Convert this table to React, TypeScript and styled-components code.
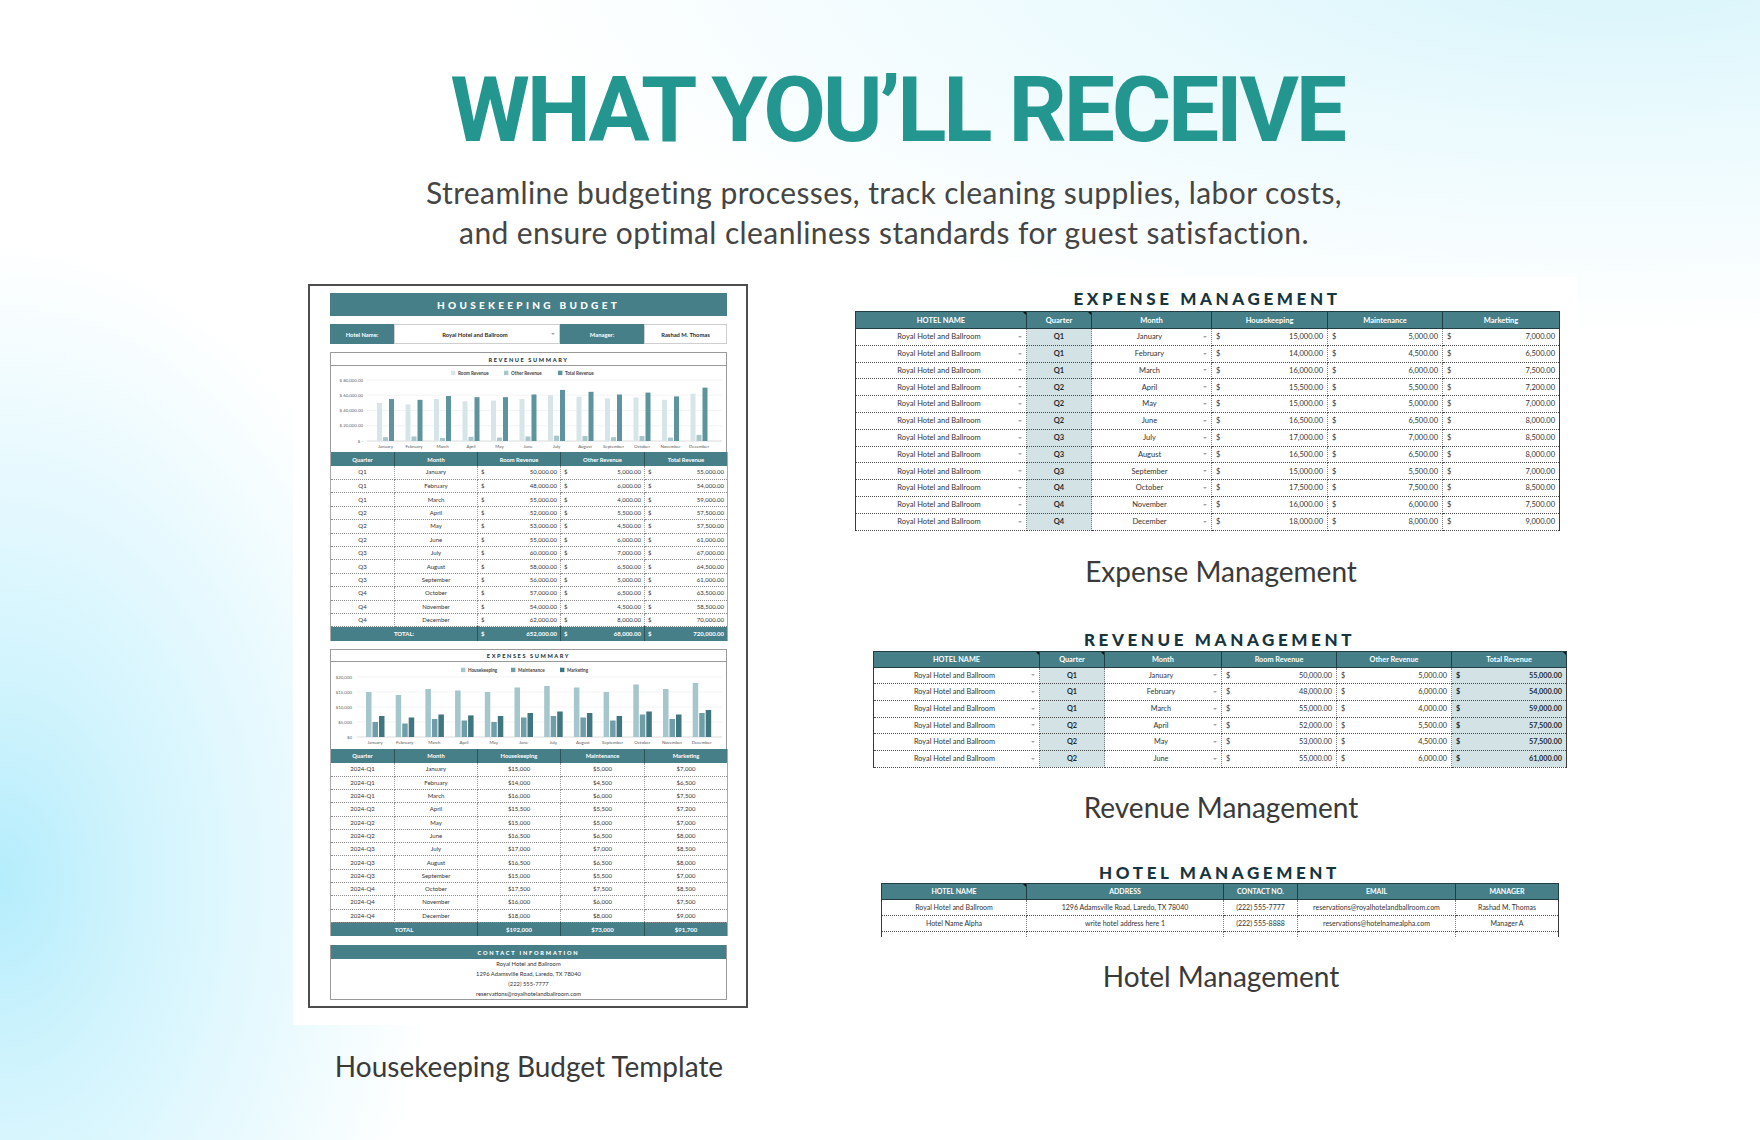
import React from 'react';
import styled, { createGlobalStyle } from 'styled-components';

const GlobalStyle = createGlobalStyle`
  html, body { margin: 0; padding: 0; }
  body { font-family: Lato, 'Liberation Sans', sans-serif; }
`;

const months = ['January', 'February', 'March', 'April', 'May', 'June', 'July', 'August', 'September', 'October', 'November', 'December'];
const quarters = ['Q1', 'Q1', 'Q1', 'Q2', 'Q2', 'Q2', 'Q3', 'Q3', 'Q3', 'Q4', 'Q4', 'Q4'];
const revenue = [
  [50000, 5000, 55000], [48000, 6000, 54000], [55000, 4000, 59000], [52000, 5500, 57500],
  [53000, 4500, 57500], [55000, 6000, 61000], [60000, 7000, 67000], [58000, 6500, 64500],
  [56000, 5000, 61000], [57000, 6500, 63500], [54000, 4500, 58500], [62000, 8000, 70000],
];
const expenses = [
  [15000, 5000, 7000], [14000, 4500, 6500], [16000, 6000, 7500], [15500, 5500, 7200],
  [15000, 5000, 7000], [16500, 6500, 8000], [17000, 7000, 8500], [16500, 6500, 8000],
  [15000, 5500, 7000], [17500, 7500, 8500], [16000, 6000, 7500], [18000, 8000, 9000],
];

const fmt2 = (n: number) => n.toLocaleString('en-US', { minimumFractionDigits: 2, maximumFractionDigits: 2 });
const fmt0 = (n: number) => '$' + n.toLocaleString('en-US');

/* ---------- page ---------- */

const Page = styled.div`
  width: 1760px;
  height: 1140px;
  overflow: hidden;
  box-sizing: border-box;
  padding-top: 65px;
  background:
    radial-gradient(ellipse 440px 640px at 0px 880px, #b5edfc 0%, rgba(190, 239, 252, 0.7) 32%, rgba(255, 255, 255, 0) 100%),
    radial-gradient(ellipse 1150px 380px at 1620px -40px, #d6f4fb 0%, rgba(222, 247, 252, 0.6) 45%, rgba(255, 255, 255, 0) 100%),
    #ffffff;
`;

const Title = styled.h1`
  margin: 0;
  padding-left: 34px;
  font-family: Roboto, 'Liberation Sans', sans-serif;
  font-weight: 700;
  font-size: 91px;
  line-height: 91px;
  letter-spacing: -3.2px;
  color: #23978f;
  text-align: center;
`;

const Subtitle = styled.p`
  margin: 16px 0 0;
  padding-left: 8px;
  font-family: Lato, 'Liberation Sans', sans-serif;
  font-size: 30px;
  line-height: 40px;
  letter-spacing: 0.4px;
  color: #454545;
  text-align: center;
`;

const Main = styled.div`
  display: flex;
  align-items: flex-start;
  margin-top: 16px;
  padding-left: 293px;
`;

const LeftCol = styled.div`
  width: 472px;
  display: flex;
  flex-direction: column;
`;

const RightCol = styled.div`
  width: 736px;
  margin: 9px 0 0 88px;
  display: flex;
  flex-direction: column;
  align-items: flex-start;
`;

const Caption = styled.div<{ $mt: number }>`
  align-self: stretch;
  margin-top: ${p => p.$mt}px;
  font-family: Lato, 'Liberation Sans', sans-serif;
  font-size: 28px;
  line-height: 40px;
  color: #3a3a3a;
  text-align: center;
`;

/* ---------- printed document ---------- */

const DocFrame = styled.div`
  background: #ffffff;
  padding: 16px 17px 17px 15px;
`;

const Doc = styled.div`
  width: 440px;
  height: 724px;
  box-sizing: border-box;
  border: 2px solid #4d4d4d;
  padding: 7px 19px 0 20px;
  background: #ffffff;
  display: flex;
  flex-direction: column;
  gap: 8px;
  font-family: Lato, 'Liberation Sans', sans-serif;
  color: #333;
`;

const DocBanner = styled.div`
  height: 23px;
  background: #477f89;
  color: #ffffff;
  display: flex;
  align-items: center;
  justify-content: center;
  font-weight: 900;
  font-size: 10px;
  letter-spacing: 3.3px;
`;

const InfoRow = styled.div`
  display: grid;
  grid-template-columns: 64px 166px 84px 83px;
  height: 20px;
`;

const InfoLabel = styled.div`
  background: #477f89;
  color: #ffffff;
  font-weight: 700;
  font-size: 5.8px;
  display: flex;
  align-items: center;
  justify-content: center;
`;

const InfoValue = styled.div`
  box-sizing: border-box;
  border: 1px solid #cfcfcf;
  font-weight: 700;
  font-size: 5.8px;
  color: #2b2b2b;
  display: flex;
  align-items: center;
  justify-content: center;
  padding: 0 4px;
`;

const SummaryBox = styled.div`
  display: flex;
  flex-direction: column;
`;

const SummaryHead = styled.div<{ $h: number }>`
  height: ${p => p.$h}px;
  box-sizing: border-box;
  border: 1px solid #9a9a9a;
  display: flex;
  align-items: center;
  justify-content: center;
  font-weight: 900;
  font-size: 5.6px;
  letter-spacing: 1.6px;
  color: #1f3a44;
`;

const ChartBox = styled.div<{ $h: number }>`
  height: ${p => p.$h}px;
  box-sizing: border-box;
  border-left: 1px solid #9a9a9a;
  border-right: 1px solid #9a9a9a;
  svg { display: block; }
`;

const MiniTable = styled.table`
  width: 397px;
  border-collapse: collapse;
  table-layout: fixed;
  font-size: 6px;
  color: #333;
  border-left: 1px solid #aaaaaa;
  border-right: 1px solid #aaaaaa;
`;

const MiniCol = styled.col<{ $w: number }>`
  width: ${p => p.$w}px;
`;

const MiniRow = styled.tr<{ $h: number }>`
  height: ${p => p.$h}px;
`;

const MiniTh = styled.th`
  padding: 0;
  background: #477f89;
  color: #ffffff;
  font-weight: 700;
  font-size: 5.8px;
  border-right: 1px solid #2e545b;
  &:last-child { border-right: none; }
`;

const MiniTd = styled.td<{ $total?: boolean }>`
  padding: 0 3px;
  line-height: 1;
  text-align: center;
  background: ${p => (p.$total ? '#477f89' : 'transparent')};
  color: ${p => (p.$total ? '#ffffff' : '#333333')};
  font-weight: ${p => (p.$total ? 700 : 400)};
  border-bottom: ${p => (p.$total ? 'none' : '1px dotted #8c8c8c')};
  border-right: ${p => (p.$total ? '1px solid #2e545b' : '1px dotted #a0a0a0')};
  &:last-child { border-right: none; }
`;

const Money = styled.div`
  display: flex;
  justify-content: space-between;
`;

const ContactBox = styled.div`
  margin-top: 1px;
  border: 1px solid #9a9a9a;
  border-top: none;
`;

const ContactHead = styled.div`
  height: 14px;
  background: #477f89;
  color: #ffffff;
  display: flex;
  align-items: center;
  justify-content: center;
  font-weight: 900;
  font-size: 5.6px;
  letter-spacing: 1.8px;
`;

const ContactLine = styled.div`
  height: 10px;
  line-height: 10px;
  font-size: 5.8px;
  text-align: center;
  color: #333;
`;

/* ---------- spreadsheet tables ---------- */

const Block = styled.div<{ $w: number; $ml: number; $mt: number; $pad: string }>`
  width: ${p => p.$w}px;
  box-sizing: border-box;
  margin: ${p => p.$mt}px 0 0 ${p => p.$ml}px;
  padding: ${p => p.$pad};
  background: #ffffff;
`;

const SectionTitle = styled.h3<{ $mb: number }>`
  margin: 0 0 ${p => p.$mb}px;
  font-family: Lato, 'Liberation Sans', sans-serif;
  font-weight: 900;
  font-size: 17px;
  line-height: 20px;
  letter-spacing: 3.6px;
  color: #173540;
  text-align: center;
`;

const Sheet = styled.table<{ $fs: number }>`
  width: 100%;
  border-collapse: collapse;
  table-layout: fixed;
  font-family: Lato, 'Liberation Sans', sans-serif;
  font-size: ${p => p.$fs}px;
  color: #333333;
  border-left: 1px solid #3a3a3a;
  border-right: 1px solid #3a3a3a;
`;

const SheetRow = styled.tr<{ $h: number }>`
  height: ${p => p.$h}px;
`;

const SheetTh = styled.th<{ $flag?: boolean }>`
  position: relative;
  padding: 0;
  background: #477f89;
  color: #ffffff;
  font-weight: 700;
  border: 1px solid #223e44;
  &::after {
    content: '';
    display: ${p => (p.$flag ? 'block' : 'none')};
    position: absolute;
    top: 0;
    right: 0;
    border-top: 3px solid #111111;
    border-left: 3px solid transparent;
  }
`;

const SheetTd = styled.td<{ $shade?: boolean; $bold?: boolean; $open?: boolean }>`
  padding: 0 4px;
  line-height: 1;
  text-align: center;
  background: ${p => (p.$shade ? '#d3e2e5' : 'transparent')};
  font-weight: ${p => (p.$bold ? 700 : 400)};
  color: ${p => (p.$bold ? '#1d2b30' : '#333333')};
  border-bottom: ${p => (p.$open ? 'none' : '1px dotted #4a4a4a')};
  border-right: 1px dotted #7a7a7a;
  &:last-child { border-right: none; }
`;

const Pick = styled.div`
  display: flex;
  align-items: center;
`;

const PickText = styled.span`
  flex: 1;
  text-align: center;
`;

const Caret = styled.span`
  width: 0;
  height: 0;
  border-top: 2.5px solid #a5a5a5;
  border-left: 2px solid transparent;
  border-right: 2px solid transparent;
`;

/* ---------- charts ---------- */

const ChartText = styled.text`
  font-family: Lato, 'Liberation Sans', sans-serif;
`;

type LegendItem = { x: number; color: string; label: string };

function Legend({ items, y }: { items: LegendItem[]; y: number }) {
  return (
    <g>
      {items.map(it => (
        <g key={it.label}>
          <rect x={it.x} y={y - 2.3} width={4.4} height={4.4} fill={it.color} />
          <ChartText x={it.x + 7} y={y + 1.6} fontSize={4.6} fontWeight={700} fill="#444">
            {it.label}
          </ChartText>
        </g>
      ))}
    </g>
  );
}

function RevenueChart() {
  const base = 75;
  const step = 15.25;
  const scale = (4 * step) / 80000;
  const colors = ['#d6e5e8', '#a8c7cd', '#5e949d'];
  return (
    <svg width={395} height={86} viewBox="1 0 395 86">
      <Legend
        y={7}
        items={[
          { x: 121, color: colors[0], label: 'Room Revenue' },
          { x: 174, color: colors[1], label: 'Other Revenue' },
          { x: 228, color: colors[2], label: 'Total Revenue' },
        ]}
      />
      {[0, 1, 2, 3, 4].map(k => {
        const y = base - k * step;
        return (
          <g key={k}>
            <line x1={37} x2={392} y1={y} y2={y} stroke={k === 0 ? '#c4c4c4' : '#ececec'} strokeWidth={0.6} />
            <ChartText x={33} y={y + 1.6} fontSize={4.4} fill="#666" textAnchor="end">
              {k === 0 ? '$ -' : `$ ${(k * 20000).toLocaleString('en-US')}.00`}
            </ChartText>
          </g>
        );
      })}
      {revenue.map((r, i) => {
        const cx = 55 + 28.5 * i;
        return (
          <g key={i}>
            {r.map((v, j) => (
              <rect key={j} x={cx - 8 + j * 6} y={base - v * scale} width={5} height={v * scale} fill={colors[j]} />
            ))}
            <ChartText x={cx + 0.5} y={81.8} fontSize={4.4} fill="#555" textAnchor="middle">
              {months[i]}
            </ChartText>
          </g>
        );
      })}
    </svg>
  );
}

function ExpenseChart() {
  const base = 75;
  const scale = 60 / 20000;
  const colors = ['#a4c6cc', '#6f9ea8', '#3f7680'];
  return (
    <svg width={395} height={87} viewBox="1 0 395 87">
      <Legend
        y={8}
        items={[
          { x: 131, color: colors[0], label: 'Housekeeping' },
          { x: 181, color: colors[1], label: 'Maintenance' },
          { x: 230, color: colors[2], label: 'Marketing' },
        ]}
      />
      {[0, 1, 2, 3, 4].map(k => {
        const y = base - k * 15;
        return (
          <g key={k}>
            <line x1={27} x2={392} y1={y} y2={y} stroke={k === 0 ? '#c4c4c4' : '#ececec'} strokeWidth={0.6} />
            <ChartText x={22} y={y + 1.6} fontSize={4.4} fill="#666" textAnchor="end">
              {k === 0 ? '$0' : fmt0(k * 5000)}
            </ChartText>
          </g>
        );
      })}
      {expenses.map((r, i) => {
        const cx = 45 + 29.7 * i;
        return (
          <g key={i}>
            {r.map((v, j) => (
              <rect key={j} x={cx - 9 + j * 6.5} y={base - v * scale} width={5.5} height={v * scale} fill={colors[j]} />
            ))}
            <ChartText x={cx} y={82.2} fontSize={4.4} fill="#555" textAnchor="middle">
              {months[i]}
            </ChartText>
          </g>
        );
      })}
    </svg>
  );
}

/* ---------- document tables ---------- */

const docCols = [64, 83, 83, 84, 83];

function DocRevenueTable() {
  const totals = [652000, 68000, 720000];
  return (
    <MiniTable>
      <colgroup>
        {docCols.map((w, i) => <MiniCol key={i} $w={w} />)}
      </colgroup>
      <tbody>
        <MiniRow $h={14}>
          {['Quarter', 'Month', 'Room Revenue', 'Other Revenue', 'Total Revenue'].map(h => <MiniTh key={h}>{h}</MiniTh>)}
        </MiniRow>
        {revenue.map((r, i) => (
          <MiniRow key={i} $h={13.42}>
            <MiniTd>{quarters[i]}</MiniTd>
            <MiniTd>{months[i]}</MiniTd>
            {r.map((v, j) => (
              <MiniTd key={j}>
                <Money><span>$</span><span>{fmt2(v)}</span></Money>
              </MiniTd>
            ))}
          </MiniRow>
        ))}
        <MiniRow $h={14}>
          <MiniTd $total colSpan={2}>TOTAL:</MiniTd>
          {totals.map((v, j) => (
            <MiniTd $total key={j}>
              <Money><span>$</span><span>{fmt2(v)}</span></Money>
            </MiniTd>
          ))}
        </MiniRow>
      </tbody>
    </MiniTable>
  );
}

function DocExpenseTable() {
  const totals = [192000, 73000, 91700];
  return (
    <MiniTable>
      <colgroup>
        {docCols.map((w, i) => <MiniCol key={i} $w={w} />)}
      </colgroup>
      <tbody>
        <MiniRow $h={14}>
          {['Quarter', 'Month', 'Housekeeping', 'Maintenance', 'Marketing'].map(h => <MiniTh key={h}>{h}</MiniTh>)}
        </MiniRow>
        {expenses.map((r, i) => (
          <MiniRow key={i} $h={13.3}>
            <MiniTd>2024-{quarters[i]}</MiniTd>
            <MiniTd>{months[i]}</MiniTd>
            {r.map((v, j) => <MiniTd key={j}>{fmt0(v)}</MiniTd>)}
          </MiniRow>
        ))}
        <MiniRow $h={14}>
          <MiniTd $total colSpan={2}>TOTAL</MiniTd>
          {totals.map((v, j) => <MiniTd $total key={j}>{fmt0(v)}</MiniTd>)}
        </MiniRow>
      </tbody>
    </MiniTable>
  );
}

function BudgetDocument() {
  return (
    <DocFrame>
      <Doc>
        <DocBanner>HOUSEKEEPING BUDGET</DocBanner>
        <InfoRow>
          <InfoLabel>Hotel Name:</InfoLabel>
          <InfoValue>
            <PickText>Royal Hotel and Ballroom</PickText>
            <Caret />
          </InfoValue>
          <InfoLabel>Manager:</InfoLabel>
          <InfoValue>Rashad M. Thomas</InfoValue>
        </InfoRow>
        <SummaryBox>
          <SummaryHead $h={14}>REVENUE SUMMARY</SummaryHead>
          <ChartBox $h={86}>
            <RevenueChart />
          </ChartBox>
          <DocRevenueTable />
        </SummaryBox>
        <SummaryBox>
          <SummaryHead $h={13}>EXPENSES SUMMARY</SummaryHead>
          <ChartBox $h={87}>
            <ExpenseChart />
          </ChartBox>
          <DocExpenseTable />
        </SummaryBox>
        <ContactBox>
          <ContactHead>CONTACT INFORMATION</ContactHead>
          <ContactLine>Royal Hotel and Ballroom</ContactLine>
          <ContactLine>1296 Adamsville Road, Laredo, TX 78040</ContactLine>
          <ContactLine>(222) 555-7777</ContactLine>
          <ContactLine>reservations@royalhotelandballroom.com</ContactLine>
        </ContactBox>
      </Doc>
    </DocFrame>
  );
}

/* ---------- spreadsheet sections ---------- */

const SheetCol = styled.col<{ $w: number }>`
  width: ${p => p.$w}px;
`;

function ExpenseSheet() {
  const cols = [171, 65, 120, 116, 115, 117];
  return (
    <Sheet $fs={7.5}>
      <colgroup>
        {cols.map((w, i) => <SheetCol key={i} $w={w} />)}
      </colgroup>
      <tbody>
        <SheetRow $h={17}>
          <SheetTh $flag>HOTEL NAME</SheetTh>
          <SheetTh $flag>Quarter</SheetTh>
          <SheetTh>Month</SheetTh>
          <SheetTh>Housekeeping</SheetTh>
          <SheetTh>Maintenance</SheetTh>
          <SheetTh>Marketing</SheetTh>
        </SheetRow>
        {expenses.map((r, i) => (
          <SheetRow key={i} $h={16.8}>
            <SheetTd>
              <Pick><PickText>Royal Hotel and Ballroom</PickText><Caret /></Pick>
            </SheetTd>
            <SheetTd $shade $bold>{quarters[i]}</SheetTd>
            <SheetTd>
              <Pick><PickText>{months[i]}</PickText><Caret /></Pick>
            </SheetTd>
            {r.map((v, j) => (
              <SheetTd key={j}>
                <Money><span>$</span><span>{fmt2(v)}</span></Money>
              </SheetTd>
            ))}
          </SheetRow>
        ))}
      </tbody>
    </Sheet>
  );
}

function RevenueSheet() {
  const cols = [166, 65, 117, 115, 115, 115];
  return (
    <Sheet $fs={7.3}>
      <colgroup>
        {cols.map((w, i) => <SheetCol key={i} $w={w} />)}
      </colgroup>
      <tbody>
        <SheetRow $h={16}>
          <SheetTh $flag>HOTEL NAME</SheetTh>
          <SheetTh $flag>Quarter</SheetTh>
          <SheetTh>Month</SheetTh>
          <SheetTh>Room Revenue</SheetTh>
          <SheetTh>Other Revenue</SheetTh>
          <SheetTh $flag>Total Revenue</SheetTh>
        </SheetRow>
        {revenue.slice(0, 6).map((r, i) => (
          <SheetRow key={i} $h={16.67}>
            <SheetTd>
              <Pick><PickText>Royal Hotel and Ballroom</PickText><Caret /></Pick>
            </SheetTd>
            <SheetTd $shade $bold>{quarters[i]}</SheetTd>
            <SheetTd>
              <Pick><PickText>{months[i]}</PickText><Caret /></Pick>
            </SheetTd>
            {r.map((v, j) => (
              <SheetTd key={j} $shade={j === 2} $bold={j === 2}>
                <Money><span>$</span><span>{fmt2(v)}</span></Money>
              </SheetTd>
            ))}
          </SheetRow>
        ))}
      </tbody>
    </Sheet>
  );
}

const hotels = [
  ['Royal Hotel and Ballroom', '1296 Adamsville Road, Laredo, TX 78040', '(222) 555-7777', 'reservations@royalhotelandballroom.com', 'Rashad M. Thomas'],
  ['Hotel Name Alpha', 'write hotel address here 1', '(222) 555-8888', 'reservations@hotelnamealpha.com', 'Manager A'],
];

function HotelSheet() {
  const cols = [145, 197, 74, 158, 103];
  return (
    <Sheet $fs={7}>
      <colgroup>
        {cols.map((w, i) => <SheetCol key={i} $w={w} />)}
      </colgroup>
      <tbody>
        <SheetRow $h={16}>
          <SheetTh $flag>HOTEL NAME</SheetTh>
          <SheetTh>ADDRESS</SheetTh>
          <SheetTh>CONTACT NO.</SheetTh>
          <SheetTh>EMAIL</SheetTh>
          <SheetTh>MANAGER</SheetTh>
        </SheetRow>
        {hotels.map((h, i) => (
          <SheetRow key={i} $h={16}>
            {h.map((c, j) => <SheetTd key={j}>{c}</SheetTd>)}
          </SheetRow>
        ))}
        <SheetRow $h={6}>
          {cols.map((_, j) => <SheetTd key={j} $open />)}
        </SheetRow>
      </tbody>
    </Sheet>
  );
}

export default function App() {
  return (
    <Page>
      <GlobalStyle />
      <Title>WHAT YOU’LL RECEIVE</Title>
      <Subtitle>
        Streamline budgeting processes, track cleaning supplies, labor costs,
        <br />
        and ensure optimal cleanliness standards for guest satisfaction.
      </Subtitle>
      <Main>
        <LeftCol>
          <BudgetDocument />
          <Caption $mt={21}>Housekeeping Budget Template</Caption>
        </LeftCol>
        <RightCol>
          <Block $w={724} $ml={0} $mt={0} $pad="12px 18px 5px 2px">
            <SectionTitle $mb={2}>EXPENSE MANAGEMENT</SectionTitle>
            <ExpenseSheet />
          </Block>
          <Caption $mt={15}>Expense Management</Caption>
          <Block $w={701} $ml={16} $mt={31} $pad="8px 4px 4px 4px">
            <SectionTitle $mb={1}>REVENUE MANAGEMENT</SectionTitle>
            <RevenueSheet />
          </Block>
          <Caption $mt={15}>Revenue Management</Caption>
          <Block $w={685} $ml={24} $mt={28} $pad="8px 4px 0 4px">
            <SectionTitle $mb={0}>HOTEL MANAGEMENT</SectionTitle>
            <HotelSheet />
          </Block>
          <Caption $mt={19}>Hotel Management</Caption>
        </RightCol>
      </Main>
    </Page>
  );
}
